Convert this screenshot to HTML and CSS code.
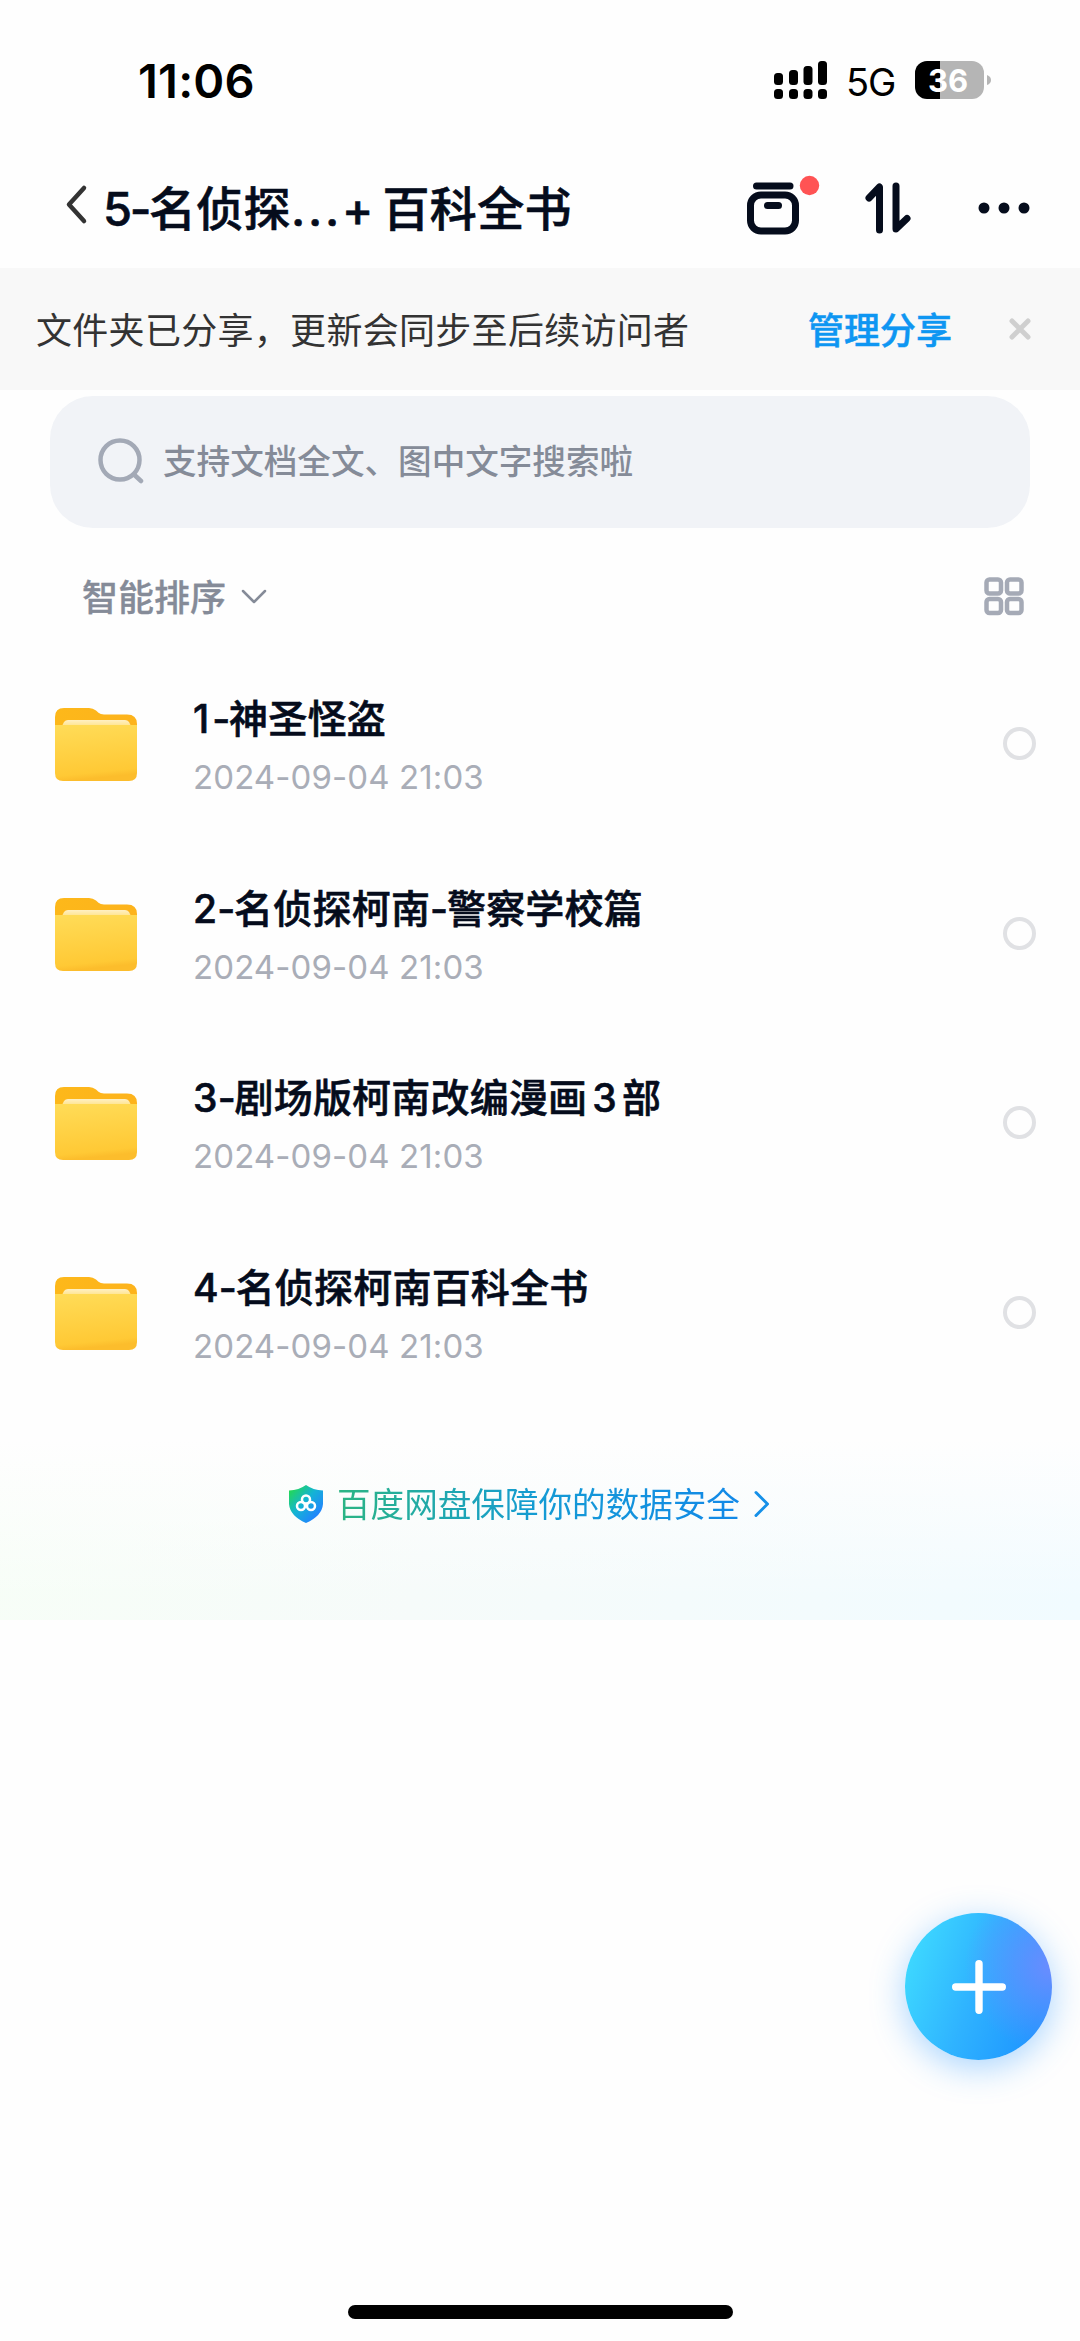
FILE: index.html
```html
<!DOCTYPE html>
<html lang="zh-CN">
<head>
<meta charset="utf-8">
<title>5-名侦探…+ 百科全书</title>
<link rel="stylesheet" href="styles.css">
</head>
<body>
<svg class="defs" width="0" height="0" aria-hidden="true">
  <defs>
    <linearGradient id="back" x1="0" y1="0" x2="1" y2="0"><stop offset="0" stop-color="#fdb81a"/><stop offset="1" stop-color="#fdb31c"/></linearGradient>
    <linearGradient id="front" x1="0" y1="0" x2=".15" y2="1"><stop offset="0" stop-color="#ffdc58"/><stop offset=".9" stop-color="#ffc935"/><stop offset="1" stop-color="#fcbd2c"/></linearGradient>
    <linearGradient id="paper" x1="0" y1="0" x2="0" y2="1"><stop offset="0" stop-color="#fff0c4"/><stop offset="1" stop-color="#ffe07a"/></linearGradient>
    <linearGradient id="shield" x1="0.1" y1="0.1" x2=".8" y2=".8"><stop offset="0" stop-color="#22d65c"/><stop offset=".5" stop-color="#14b4d4"/><stop offset="1" stop-color="#2187fb"/></linearGradient>
    <symbol id="folder" viewBox="0 0 82 73">
      <path d="M0 24V9Q0 0 9 0H34Q38 0 41 2.500L43.500 4.800Q45.500 6.500 49 6.500H72Q82 6.500 82 16V24Z" fill="url(#back)"/>
      <path d="M7 20Q8 12 13 12H70Q75 12 76 20Z" fill="url(#paper)"/>
      <path d="M0 17H82V65Q82 73 74 73H8Q0 73 0 65Z" fill="url(#front)"/>
    </symbol>
  </defs>
</svg>
<div class="screen">
  <header class="status">
    <span class="time">11:06</span>
    <div class="status-icons">
      <svg width="54" height="39" viewBox="0 0 54 39"><g><rect x="0" y="12" width="9" height="12" rx="3.500"/><rect x="15" y="9" width="9" height="15" rx="3.500"/><rect x="29.500" y="5" width="9" height="19" rx="3.500"/><rect x="44" y="0" width="9" height="24" rx="3.500"/><rect x="0" y="28" width="9" height="10" rx="3.500"/><rect x="15" y="28" width="9" height="10" rx="3.500"/><rect x="29.500" y="28" width="9" height="10" rx="3.500"/><rect x="44" y="28" width="9" height="10" rx="3.500"/></g></svg>
      <span class="network">5G</span>
      <span class="battery">36</span>
      <svg class="cap" width="4" height="10" viewBox="0 0 4 10"><path d="M0 0Q4 1.500 4 5T0 10Z" fill="#b5b5b5"/></svg>
    </div>
  </header>

  <nav class="nav">
    <svg class="back" width="24" height="42" viewBox="0 0 24 42"><path d="M19 4L4 20.500L19 37" fill="none" stroke="#333" stroke-width="4.500" stroke-linecap="round" stroke-linejoin="round"/></svg>
    <h1 class="title"><span class="lead">5-</span>名侦探<span class="dots">...</span>+ 百科全书</h1>
    <div class="nav-actions">
      <svg width="74" height="60" viewBox="0 0 74 60"><g fill="none" stroke="#050c1c" stroke-linecap="round"><path d="M9.500 11H43" stroke-width="7"/><rect x="3.500" y="20" width="45" height="36" rx="10.500" stroke-width="7"/><path d="M20.500 30.500H31.500" stroke-width="7"/></g><circle cx="62.500" cy="10.500" r="9.700" fill="#ff5354"/></svg>
      <svg width="46" height="52" viewBox="0 0 46 52"><path d="M4 16L14.500 5V48M31 4V47L42 36.500" fill="none" stroke="#050c1c" stroke-width="7" stroke-linecap="round" stroke-linejoin="round"/></svg>
      <svg width="52" height="12" viewBox="0 0 52 12" fill="#050c1c"><circle cx="6" cy="6" r="5.500"/><circle cx="26" cy="6" r="5.500"/><circle cx="46" cy="6" r="5.500"/></svg>
    </div>
  </nav>

  <section class="banner">
    <span class="banner-text">文件夹已分享，更新会同步至后续访问者</span>
    <a class="banner-link">管理分享</a>
    <svg width="24" height="24" viewBox="0 0 24 24"><path d="M4 4L20 20M20 4L4 20" stroke="#cfcfcf" stroke-width="5" stroke-linecap="round"/></svg>
  </section>

  <div class="search">
    <svg width="48" height="46" viewBox="0 0 48 46"><g fill="none" stroke="#a3a9b6" stroke-width="4.500" stroke-linecap="round"><circle cx="23" cy="22" r="19.500"/><path d="M37 36.500L44 43"/></g></svg>
    <span>支持文档全文、图中文字搜索啦</span>
  </div>

  <div class="toolbar">
    <span class="sort">智能排序</span>
    <svg width="26" height="16" viewBox="0 0 26 16"><path d="M2 2L13 13L24 2" fill="none" stroke="#858b98" stroke-width="2.500" stroke-linecap="round" stroke-linejoin="round"/></svg>
    <svg class="grid" width="40" height="39" viewBox="0 0 40 39"><g fill="none" stroke="#a5aab6" stroke-width="4.500"><rect x="2.500" y="2.500" width="14.500" height="14" rx="3"/><rect x="23" y="2.500" width="14.500" height="14" rx="3"/><rect x="2.500" y="22" width="14.500" height="14" rx="3"/><rect x="23" y="22" width="14.500" height="14" rx="3"/></g></svg>
  </div>

  <ul class="files">
    <li class="file"><svg class="folder" width="82" height="73"><use href="#folder"/></svg><div class="meta"><span class="name"><span class="one">1</span><span class="dash">-</span>神圣怪盗</span><time>2024-09-04 21:03</time></div><i class="radio"></i></li>
    <li class="file"><svg class="folder" width="82" height="73"><use href="#folder"/></svg><div class="meta"><span class="name">2<span class="dash">-</span>名侦探柯南<span class="dash">-</span>警察学校篇</span><time>2024-09-04 21:03</time></div><i class="radio"></i></li>
    <li class="file"><svg class="folder" width="82" height="73"><use href="#folder"/></svg><div class="meta"><span class="name">3<span class="dash">-</span>剧场版柯南改编漫画<span class="num">3</span>部</span><time>2024-09-04 21:03</time></div><i class="radio"></i></li>
    <li class="file"><svg class="folder" width="82" height="73"><use href="#folder"/></svg><div class="meta"><span class="name">4<span class="dash">-</span>名侦探柯南百科全书</span><time>2024-09-04 21:03</time></div><i class="radio"></i></li>
  </ul>

  <footer class="safe">
    <svg width="34" height="38" viewBox="0 0 34 38"><path d="M17 0Q24 5 34 5.500V19Q33 31 17 38Q1 31 0 19V5.500Q10 5 17 0Z" fill="url(#shield)"/><g fill="none" stroke="#fff" stroke-width="2.500"><circle cx="17" cy="14.500" r="4"/><circle cx="12" cy="21" r="4"/><circle cx="22" cy="21" r="4"/></g></svg>
    <span class="safe-text">百度网盘保障你的数据安全</span>
    <svg width="16" height="28" viewBox="0 0 16 28"><path d="M2 2.500L13.500 14L2 25.500" fill="none" stroke="#1590e8" stroke-width="3" stroke-linecap="round" stroke-linejoin="round"/></svg>
  </footer>

  <button class="fab" aria-label="添加"><svg width="54" height="54" viewBox="0 0 54 54"><path d="M27 3.700V50.300M3.700 27H50.300" stroke="#fff" stroke-width="7.400" stroke-linecap="round"/></svg></button>
  <div class="home"></div>
</div>
</body>
</html>
```
FILE: styles.css
```css
* { box-sizing: border-box; }
body { margin: 0; background: #fefefe; font-family: Inter, "Noto Sans CJK SC", sans-serif; color: #050c1c; }
svg { display: block; flex: none; }
.defs { position: absolute; }
.screen { position: relative; width: 1080px; height: 2341px; display: flex; flex-direction: column; overflow: hidden; white-space: nowrap; }

.status { height: 160px; display: flex; align-items: center; padding-left: 138px; color: #000; }
.time { font-size: 47px; font-weight: 600; letter-spacing: 0.2px; }
.status-icons { display: flex; align-items: center; margin-left: auto; padding-right: 89px; }
.network { margin-left: 18px; width: 70px; font-size: 38px; letter-spacing: -1px; padding-top: 3px; }
.battery { width: 69px; height: 38px; margin-left: -1px; border-radius: 12px; background: linear-gradient(90deg, #000 25px, #b5b5b5 25px); color: #fff; font-size: 31px; line-height: 40px; font-weight: 700; text-align: center; padding-right: 3px; }
.cap { margin-left: 3px; }

.nav { height: 108px; display: flex; align-items: center; padding: 0 50px 12px 65px; }
.back { margin-top: -6px; }
.title { margin: 0 0 0 14px; padding-top: 1px; font-size: 47px; font-weight: 500; letter-spacing: 0.3px; word-spacing: -4px; line-height: 60px; -webkit-text-stroke: 0.6px currentColor; }
.lead { letter-spacing: -2.4px; }
.dots { letter-spacing: 2.8px; }
.nav-actions { display: flex; align-items: center; margin-left: auto; }
.nav-actions svg:nth-child(1) { margin-top: -7px; }
.nav-actions svg:nth-child(2) { margin-left: 44px; }
.nav-actions svg:nth-child(3) { margin-left: 67px; }

.banner { height: 122px; display: flex; align-items: center; padding: 0 48px 0 36px; background: #f8f8f8; }
.banner-text { font-size: 36px; letter-spacing: 0.3px; color: #333; padding-bottom: 2px; }
.banner-link { margin-left: auto; margin-right: 56px; padding-bottom: 3px; font-size: 36px; font-weight: 500; color: #0e96f2; -webkit-text-stroke: 0.5px currentColor; }

.search { height: 132px; margin: 6px 50px 0; padding: 0 0 3px 47px; border-radius: 43px; background: #f1f3f7; display: flex; align-items: center; font-size: 33.6px; font-weight: 500; color: #858b98; }
.search span { margin-left: 18px; padding-bottom: 2px; }

.toolbar { height: 121px; display: flex; align-items: center; padding: 16px 56px 0 82px; font-size: 36px; font-weight: 500; color: #858b98; }
.sort { margin-right: 15px; padding-bottom: 4px; -webkit-text-stroke: 0.3px currentColor; }
.grid { margin-left: auto; }

.files { list-style: none; margin: 0; padding: 0; }
.file { height: 189.5px; display: flex; align-items: center; padding: 0 44px 0 55px; }
.folder { margin-top: 2px; }
.meta { display: flex; flex-direction: column; margin-left: 56px; margin-top: 9px; }
.name { font-size: 39px; font-weight: 500; letter-spacing: 0.2px; line-height: 58px; -webkit-text-stroke: 0.6px currentColor; }
.one { letter-spacing: 3px; }
.dash { letter-spacing: -1.2px; }
.num { padding: 0 5px; }
.meta time { font-size: 33px; line-height: 58px; letter-spacing: 0.1px; color: #a9adb7; }
.radio { width: 33px; height: 33px; margin-left: auto; border: 4px solid #e0e1e4; border-radius: 50%; }

.safe { height: 213px; padding: 0 0 19px 289px; display: flex; align-items: center; background: linear-gradient(180deg, #fefefe 15%, rgba(254, 254, 254, 0) 90%), linear-gradient(100deg, #f7fef7 0, #f6fbfa 40%, #f1fbff 100%); }
.safe-text { margin: 0 14px 0 14px; padding-bottom: 3px; font-size: 33.6px; background: linear-gradient(90deg, #2cb583, #149bd4 50%, #1289e8); -webkit-background-clip: text; background-clip: text; color: transparent; }

.fab { position: absolute; left: 905px; top: 1913px; width: 147px; height: 147px; padding: 0; border: 0; border-radius: 50%; display: flex; align-items: center; justify-content: center; background: radial-gradient(circle at 100% 36%, #6b8cff 0, rgba(107, 140, 255, 0) 50%), linear-gradient(110deg, #3fdcff 5%, #2fb3ff 48%, #1f98ff 85%); box-shadow: 0 8px 34px rgba(40, 150, 255, .4); }
.home { width: 385px; height: 14px; margin: auto auto 22px 348px; border-radius: 7px; background: #000; }
```
